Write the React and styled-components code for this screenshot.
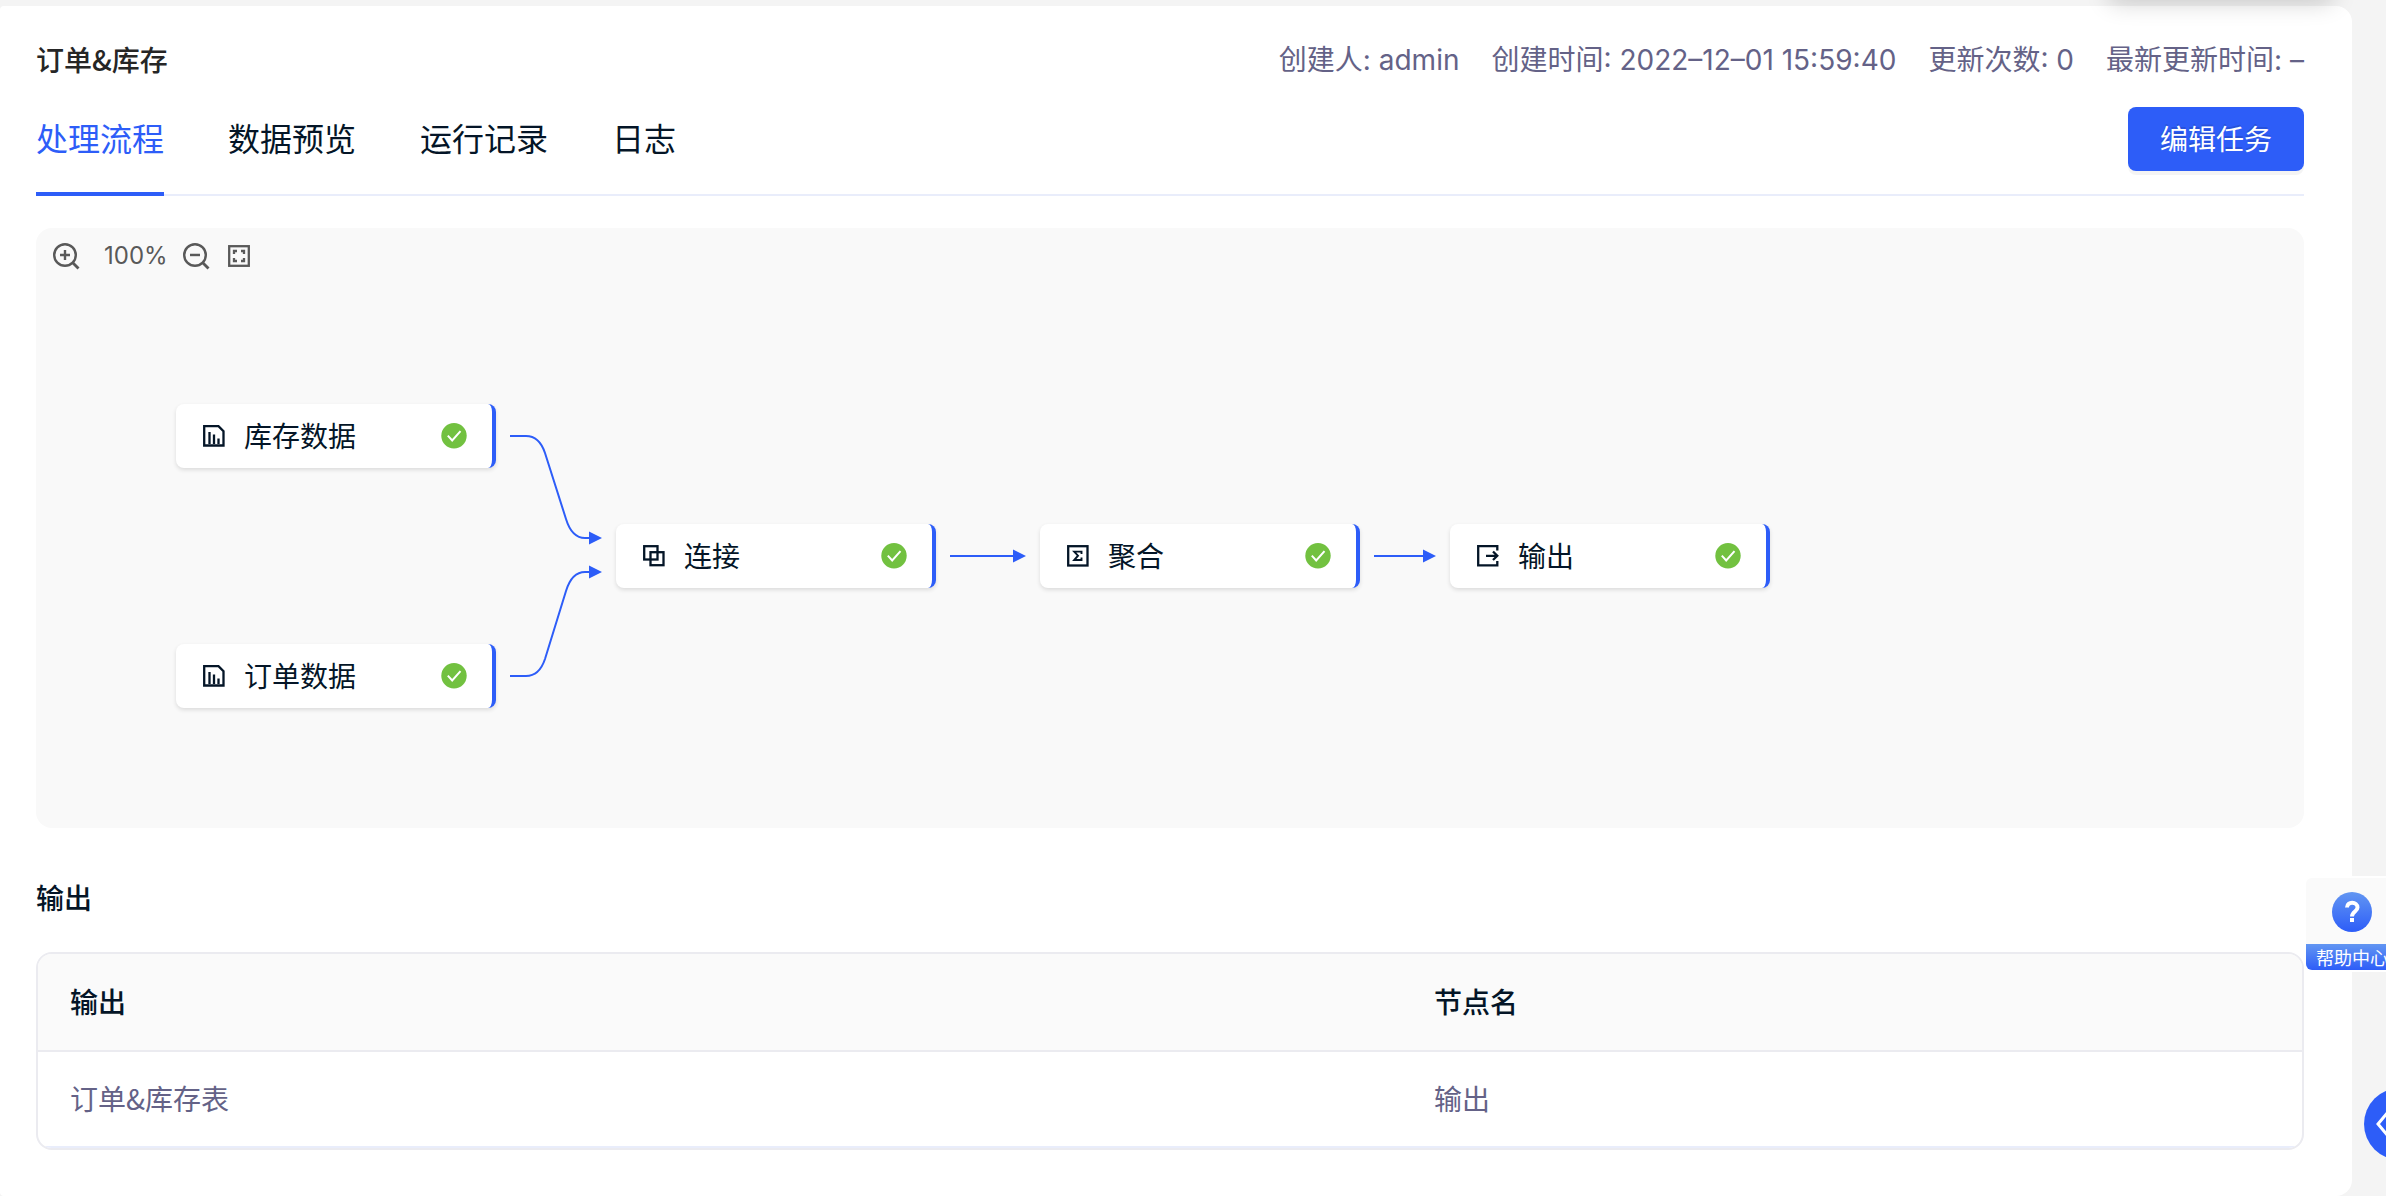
import styled, { createGlobalStyle } from "styled-components";

const GlobalStyle = createGlobalStyle`
  * {
    box-sizing: border-box;
  }
  body {
    margin: 0;
    background: #f4f4f4;
    color: #041527;
    font-family: "Noto Sans CJK SC", sans-serif;
    font-size: 28px;
    line-height: 44px;
    overflow-x: hidden;
  }
  button {
    border: none;
    background: none;
    padding: 0;
    color: inherit;
    font: inherit;
    cursor: pointer;
  }
`;

const Card = styled.main`
  margin: 6px 34px 0 0;
  padding: 32px 48px 46px 36px;
  border-radius: 4px 16px 16px 4px;
  background: #fff;
`;

const TitleRow = styled.header`
  display: flex;
  align-items: flex-start;
  justify-content: space-between;
`;

const Title = styled.h1`
  margin: 0;
  color: #262626;
  font-size: 28px;
  font-weight: 500;
  line-height: 42px;
`;

const MetaList = styled.div`
  display: flex;
  gap: 32px;
  color: #646287;
  font-family: Inter, "Noto Sans CJK SC", sans-serif;
`;

const TabBar = styled.div`
  display: flex;
  align-items: flex-start;
  justify-content: space-between;
  height: 114px;
  padding-top: 25px;
  border-bottom: 2px solid #e9edfb;
`;

const Tabs = styled.div`
  display: flex;
  gap: 64px;
`;

const Tab = styled.button`
  height: 89px;
  padding-bottom: 26px;
  border-bottom: 4px solid ${(props) => (props.$active ? "#2d5df8" : "transparent")};
  color: ${(props) => (props.$active ? "#2d5df8" : "#041527")};
  font-size: 32px;
`;

const EditButton = styled.button`
  height: 64px;
  padding: 0 32px 2px;
  border-radius: 8px;
  background: #2d5df8;
  box-shadow: 0 4px 0 rgba(0, 0, 0, 0.045);
  color: #fff;
  text-shadow: 0 -2px 0 rgba(0, 0, 0, 0.12);
`;

const Canvas = styled.section`
  position: relative;
  height: 600px;
  margin-top: 32px;
  border-radius: 16px;
  background: #f9f9f9;
  overflow: hidden;
`;

const Toolbar = styled.div`
  display: flex;
  align-items: center;
  height: 56px;
  padding-left: 16px;
  color: #595959;
  font-family: Inter, sans-serif;
  font-size: 24px;
`;

const ToolButton = styled.button`
  display: flex;
  margin-right: ${(props) => props.$gap || "0"};
`;

const Percent = styled.span`
  width: 78px;
`;

const Edges = styled.svg`
  position: absolute;
  top: 0;
  left: 0;
`;

const Node = styled.div`
  position: absolute;
  display: flex;
  align-items: center;
  width: 320px;
  height: 64px;
  padding: 0 25px 0 27px;
  border-right: 4px solid #2d5df8;
  border-radius: 8px;
  background: #fff;
  box-shadow: 0 2px 4px rgba(0, 0, 0, 0.12);
`;

const NodeName = styled.span`
  flex: 1;
  margin-left: 19px;
  padding-bottom: 2px;
`;

const SectionTitle = styled.h2`
  margin: 47px 0 33px;
  font-size: 28px;
  font-weight: 500;
`;

const TableFrame = styled.div`
  border: 2px solid #ebebf0;
  border-radius: 16px;
  overflow: hidden;
`;

const Table = styled.table`
  width: 100%;
  border-collapse: separate;
  border-spacing: 0;
  table-layout: fixed;
  text-align: left;
`;

const HeadCell = styled.th`
  width: ${(props) => props.$width || "auto"};
  height: 98px;
  padding: 0 32px 2px;
  border-bottom: 2px solid #ebebf0;
  background: #fafafa;
  font-weight: 500;
`;

const Cell = styled.td`
  height: 96px;
  padding: 0 32px 2px;
  border-bottom: 2px solid #e9edfb;
  color: #646287;
`;

const HelpCenter = styled.button`
  position: fixed;
  top: 878px;
  right: -12px;
  display: flex;
  flex-direction: column;
  align-items: center;
  width: 92px;
  height: 92px;
  padding-top: 14px;
  border-radius: 6px;
  background: #fafafa;
  box-shadow: 0 0 0 2px #fff;
  overflow: hidden;
`;

const HelpLabel = styled.span`
  width: 100%;
  margin-top: 12px;
  background: linear-gradient(#6296f2, #2d5df8);
  color: #fff;
  font-size: 18px;
  line-height: 26px;
`;

const DrawerToggle = styled.button`
  position: fixed;
  top: 1088px;
  right: -50px;
  display: flex;
  align-items: center;
  width: 72px;
  height: 72px;
  padding-left: 11px;
  border-radius: 50%;
  background: #2d5df8;
`;

// floating panel parked above the viewport, only its shadow is visible
const FloatingPanel = styled.div`
  position: fixed;
  top: -64px;
  right: 54px;
  width: 222px;
  height: 60px;
  background: #fff;
  box-shadow: 0 6px 24px rgba(0, 0, 0, 0.2);
`;

const DataIcon = () => (
  <svg width="22" height="22" viewBox="0 0 22 22" fill="none" stroke="#041527" strokeWidth="2.3">
    <path d="M1.2 1.2H15.5L20.5 6.2V20.5H1.2Z" />
    <path d="M6.5 7V19M11 9.5V19M15.5 13.5V19" />
  </svg>
);

const JoinIcon = () => (
  <svg width="22" height="22" viewBox="0 0 22 22" fill="none" stroke="#041527" strokeWidth="2.3">
    <rect x="1.2" y="1.2" width="13.3" height="13.3" />
    <rect x="7.5" y="7.2" width="13" height="13" />
  </svg>
);

const SumIcon = () => (
  <svg width="22" height="22" viewBox="0 0 22 22" fill="none" stroke="#041527" strokeWidth="2.3">
    <rect x="1.2" y="1.2" width="19.3" height="19.3" />
    <path d="M14.5 9V6.6H7.2L11 10.7L7.2 15H14.5V12.5" strokeWidth="1.9" />
  </svg>
);

const OutputIcon = () => (
  <svg width="22" height="22" viewBox="0 0 22 22" fill="none" stroke="#041527" strokeWidth="2.3">
    <path d="M20.3 5.5V1.2H1.2V20.3H20.3V16" />
    <path d="M9 10.8H20M16 6.5L20.3 10.8L16 15" />
  </svg>
);

const SuccessIcon = () => (
  <svg width="26" height="26" viewBox="0 0 26 26" fill="none">
    <circle cx="13" cy="12.7" r="12.7" fill="#72c140" />
    <path d="M6.8 12.6L11.2 17.4L19.5 8.2" stroke="#fff" strokeWidth="2" />
  </svg>
);

const ZoomIcon = ({ plus }) => (
  <svg width="28" height="28" viewBox="0 0 28 28" fill="none" stroke="#595959" strokeWidth="2.4">
    <circle cx="13" cy="13" r="10.8" />
    <path d="M20.5 20.5L26.5 26.5" strokeWidth="2.8" />
    <path d={plus ? "M8 13H18M13 8V18" : "M8 13H18"} />
  </svg>
);

const FitIcon = () => (
  <svg width="22" height="22" viewBox="0 0 22 22" fill="none" stroke="#595959" strokeWidth="2.3">
    <rect x="1.2" y="1.2" width="19.6" height="19.6" />
    <path d="M9 6H6V9M13 6H16V9M9 16H6V13M13 16H16V13" />
  </svg>
);

const HelpIcon = () => (
  <svg width="40" height="40" viewBox="0 0 40 40" fill="none">
    <defs>
      <linearGradient id="help" x1="0" y1="0" x2="0" y2="1">
        <stop stopColor="#6296f2" />
        <stop offset="1" stopColor="#2d5df8" />
      </linearGradient>
    </defs>
    <circle cx="20" cy="20" r="20" fill="url(#help)" />
    <path d="M15 15.5C15 9 25.5 9.5 25.5 15.5C25.5 19.5 20 19.5 20 24.5" stroke="#fff" strokeWidth="4" />
    <rect x="18" y="26" width="4" height="4" fill="#fff" />
  </svg>
);

const meta = [
  { label: "创建人", value: "admin" },
  { label: "创建时间", value: "2022–12–01 15:59:40" },
  { label: "更新次数", value: "0" },
  { label: "最新更新时间", value: "–" },
];

const tabs = ["处理流程", "数据预览", "运行记录", "日志"];

const nodes = [
  { name: "库存数据", x: 140, y: 176, Icon: DataIcon },
  { name: "订单数据", x: 140, y: 416, Icon: DataIcon },
  { name: "连接", x: 580, y: 296, Icon: JoinIcon },
  { name: "聚合", x: 1004, y: 296, Icon: SumIcon },
  { name: "输出", x: 1414, y: 296, Icon: OutputIcon },
];

const edges = [
  "M474 208H490C499 208 505 213 509 225L530 291C534 304 541 310 549 310H554",
  "M474 448H490C499 448 505 443 509 431L530 363C534 350 541 344 549 344H554",
  "M914 328H978",
  "M1338 328H1388",
];

const arrows = [
  [566, 310],
  [566, 344],
  [990, 328],
  [1400, 328],
];

const Flow = () => (
  <Canvas>
    <Toolbar>
      <ToolButton $gap="24px" aria-label="放大">
        <ZoomIcon plus />
      </ToolButton>
      <Percent>100%</Percent>
      <ToolButton $gap="18px" aria-label="缩小">
        <ZoomIcon />
      </ToolButton>
      <ToolButton aria-label="适应画布">
        <FitIcon />
      </ToolButton>
    </Toolbar>
    <Edges width="1800" height="600" fill="none" stroke="#2d5df8" strokeWidth="2" pointerEvents="none">
      {edges.map((d) => (
        <path key={d} d={d} />
      ))}
      {arrows.map(([x, y]) => (
        <path key={`${x}-${y}`} d={`M${x} ${y}L${x - 13} ${y - 6.5}V${y + 6.5}Z`} fill="#2d5df8" stroke="none" />
      ))}
    </Edges>
    {nodes.map(({ name, x, y, Icon }) => (
      <Node key={name} style={{ left: x, top: y }}>
        <Icon />
        <NodeName>{name}</NodeName>
        <SuccessIcon />
      </Node>
    ))}
  </Canvas>
);

const App = () => {
  return (
    <>
      <GlobalStyle />
      <Card>
        <TitleRow>
          <Title>订单&amp;库存</Title>
          <MetaList>
            {meta.map(({ label, value }) => (
              <span key={label}>
                {label}: {value}
              </span>
            ))}
          </MetaList>
        </TitleRow>
        <TabBar>
          <Tabs role="tablist">
            {tabs.map((tab, i) => (
              <Tab key={tab} role="tab" aria-selected={i === 0} $active={i === 0}>
                {tab}
              </Tab>
            ))}
          </Tabs>
          <EditButton>编辑任务</EditButton>
        </TabBar>
        <Flow />
        <SectionTitle>输出</SectionTitle>
        <TableFrame>
          <Table>
            <thead>
              <tr>
                <HeadCell $width="60.25%">输出</HeadCell>
                <HeadCell>节点名</HeadCell>
              </tr>
            </thead>
            <tbody>
              <tr>
                <Cell>订单&amp;库存表</Cell>
                <Cell>输出</Cell>
              </tr>
            </tbody>
          </Table>
        </TableFrame>
      </Card>
      <FloatingPanel />
      <HelpCenter>
        <HelpIcon />
        <HelpLabel>帮助中心</HelpLabel>
      </HelpCenter>
      <DrawerToggle aria-label="展开">
        <svg width="24" height="24" viewBox="0 0 24 24" fill="none" stroke="#fff" strokeWidth="3">
          <path d="M13 0L3 12L13 24" />
        </svg>
      </DrawerToggle>
    </>
  );
};

export default App;
